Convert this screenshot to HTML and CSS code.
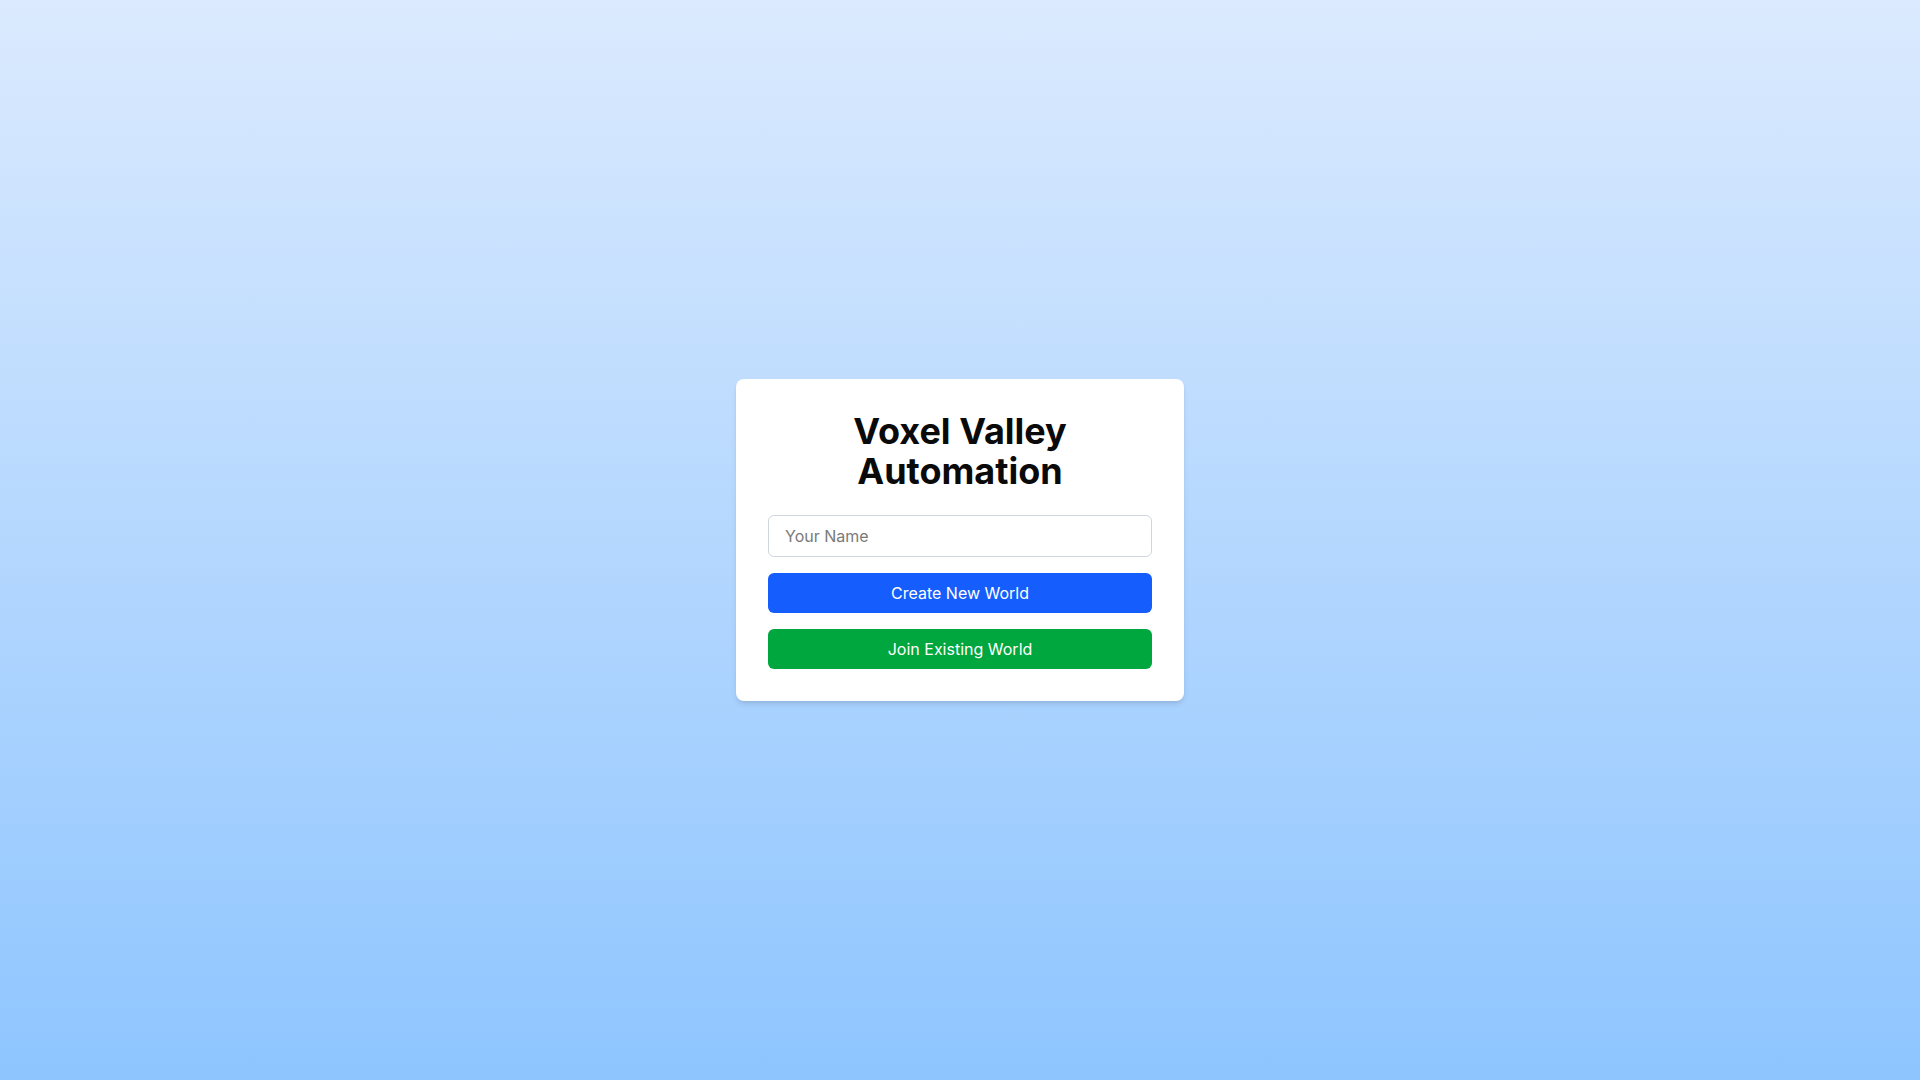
FILE: index.html
```html
<!DOCTYPE html>
<html lang="en">
<head>
<meta charset="utf-8">
<title>Voxel Valley Automation</title>
<link rel="stylesheet" href="styles.css">
</head>
<body>
<main class="page">
  <div class="card">
    <h1 class="title">Voxel Valley Automation</h1>
    <input class="name-input" type="text" placeholder="Your Name">
    <button class="btn btn-blue">Create New World</button>
    <button class="btn btn-green">Join Existing World</button>
  </div>
</main>
</body>
</html>
```

FILE: styles.css
```css
* { box-sizing: border-box; }
html, body { margin: 0; padding: 0; }
body {
  font-family: Inter, "Noto Sans", "Liberation Sans", sans-serif;
  min-height: 100vh;
  background: linear-gradient(to bottom, #dbeafe, #8ec5ff);
}
.page {
  min-height: 100vh;
  display: flex;
  align-items: center;
  justify-content: center;
}
.card {
  width: 448px;
  background: #ffffff;
  border-radius: 8px;
  padding: 32px;
  box-shadow: 0 4px 6px -1px rgba(0,0,0,0.1), 0 2px 4px -2px rgba(0,0,0,0.1);
  display: flex;
  flex-direction: column;
}
.title {
  margin: 0 0 24px 0;
  font-size: 36px;
  line-height: 40px;
  font-weight: 700;
  text-align: center;
  color: #0a0a0a;
}
.name-input {
  width: 100%;
  height: 42px;
  padding: 8px 16px;
  font-family: inherit;
  font-size: 16px;
  line-height: 24px;
  border: 1px solid #d1d5dc;
  border-radius: 6px;
  color: #101828;
  outline: none;
  margin-bottom: 16px;
}
.name-input::placeholder { color: #7a7a7a; }
.btn {
  width: 100%;
  height: 40px;
  padding: 8px 16px;
  font-family: inherit;
  font-size: 16px;
  line-height: 24px;
  color: #ffffff;
  border: none;
  border-radius: 6px;
  cursor: pointer;
}
.btn-blue { background: #155dfc; margin-bottom: 16px; }
.btn-green { background: #00a63e; }
```
